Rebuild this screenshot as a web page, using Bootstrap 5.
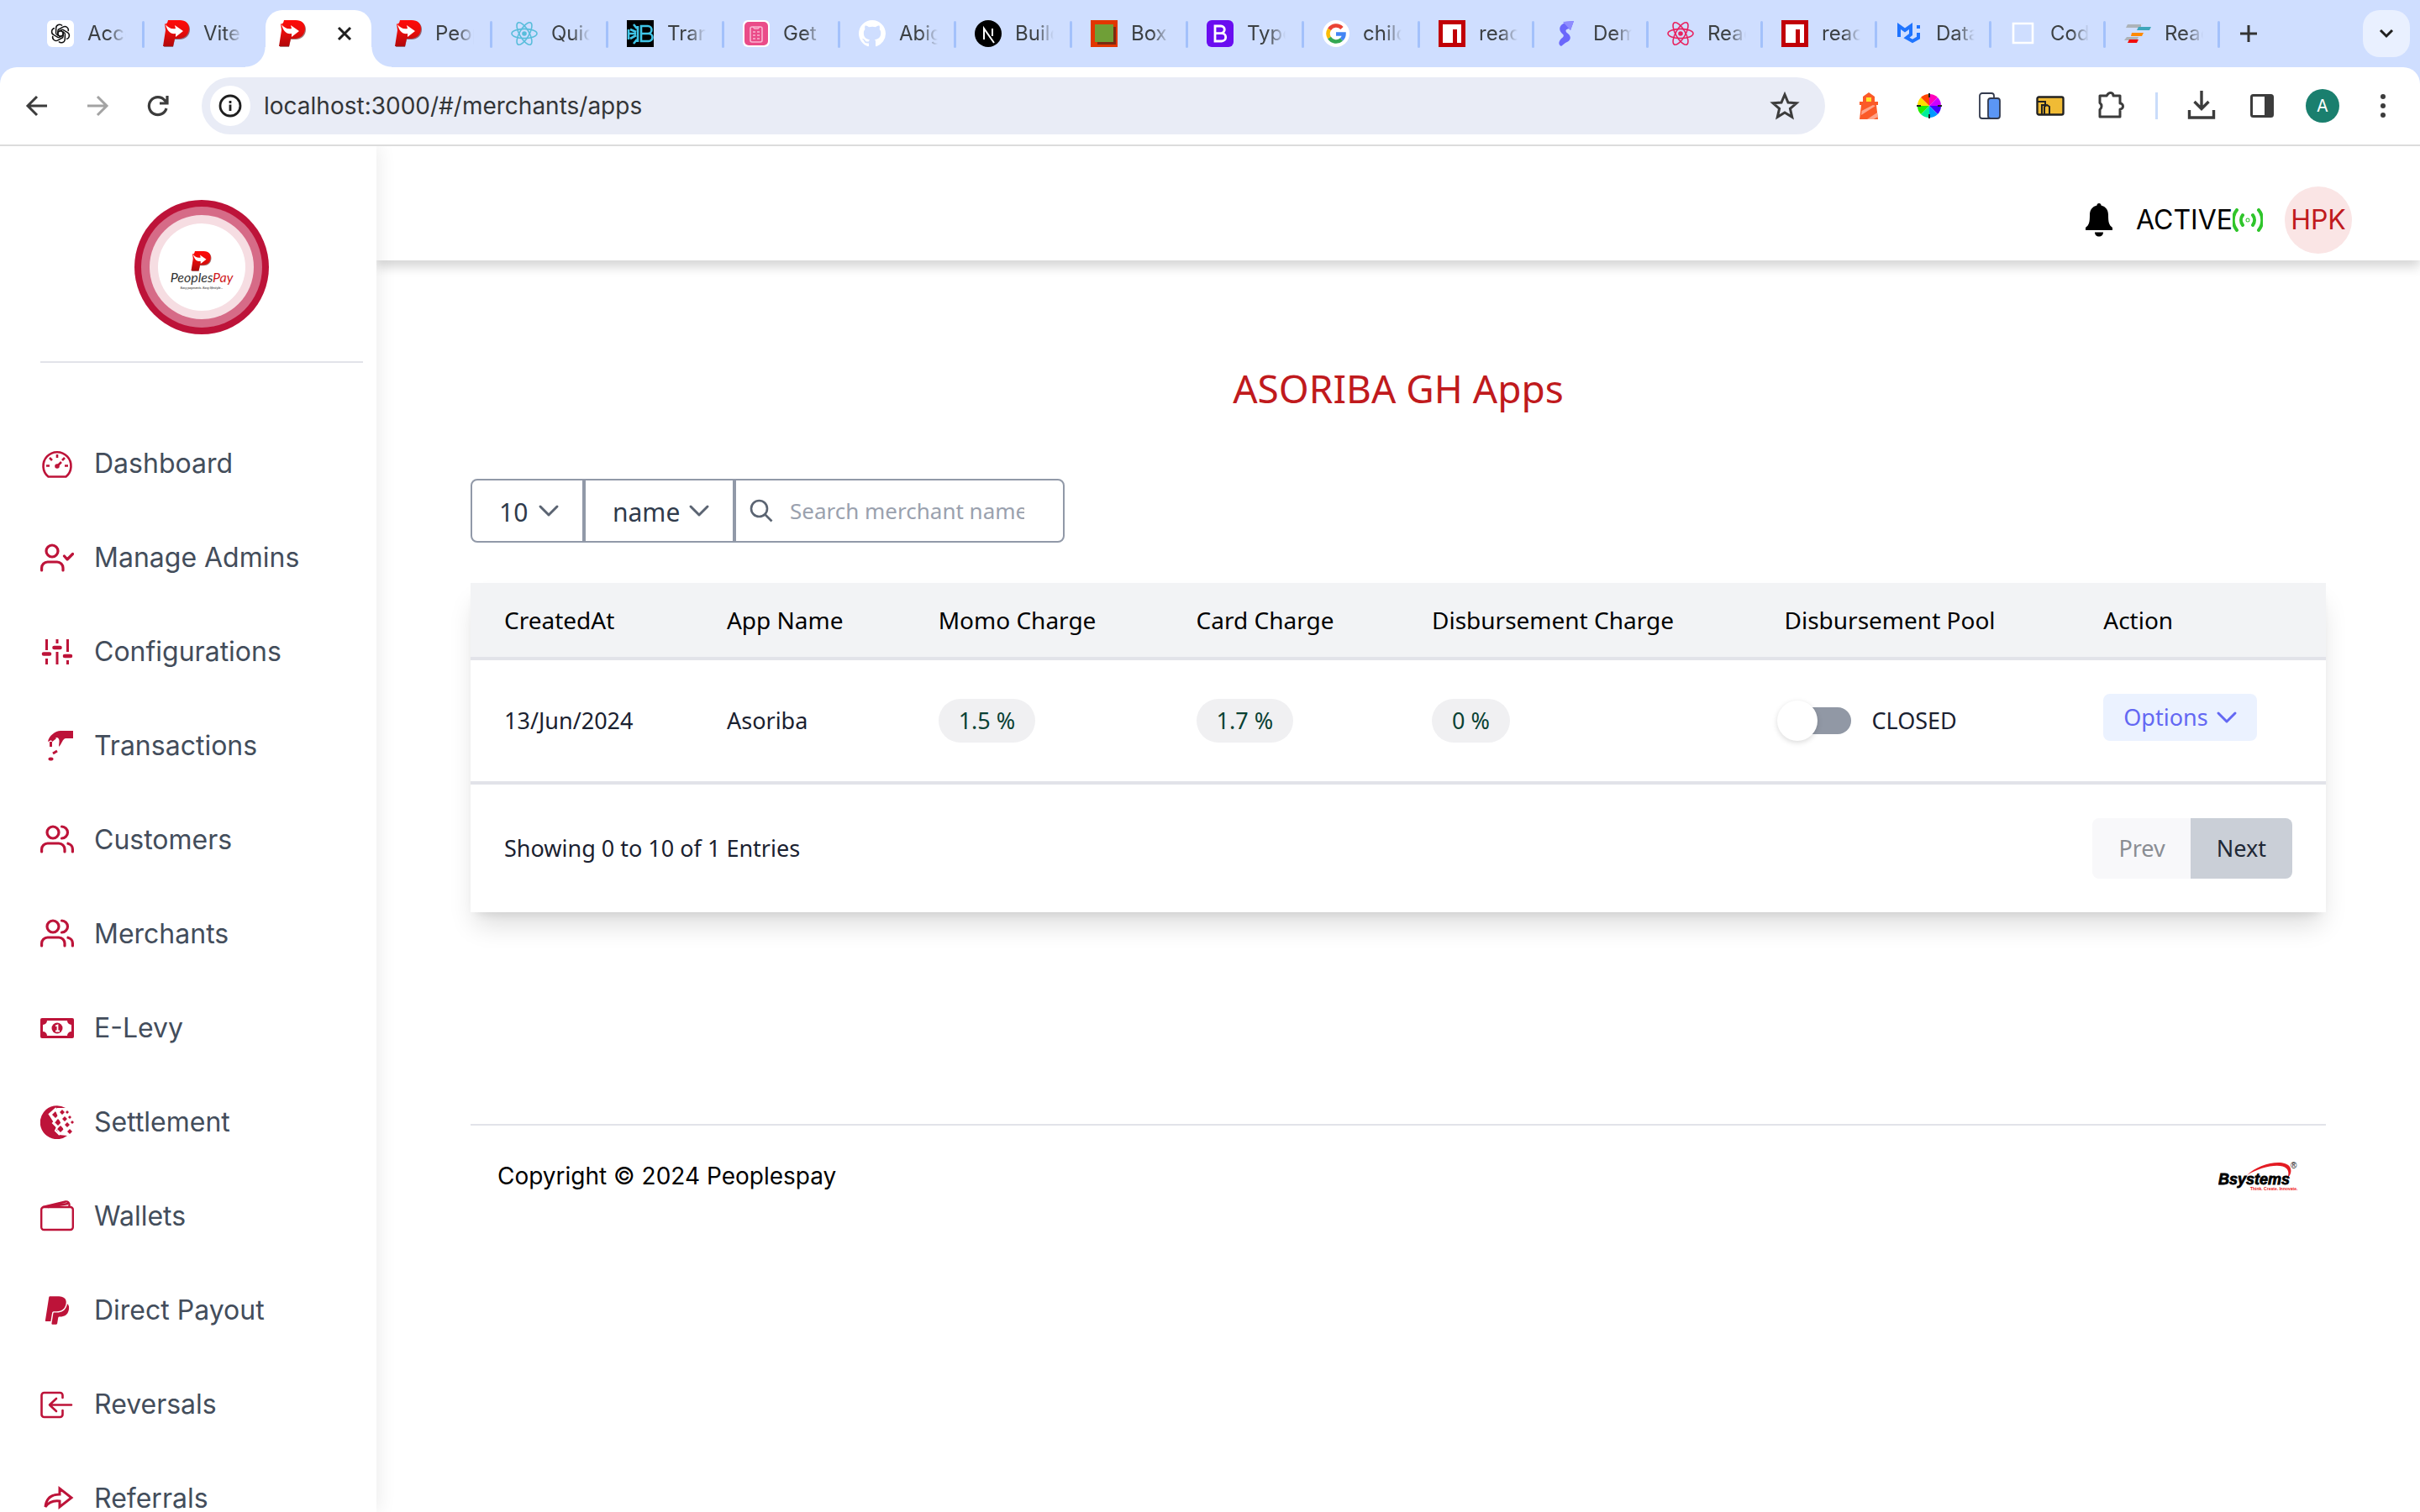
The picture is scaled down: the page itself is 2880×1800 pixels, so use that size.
<!DOCTYPE html>
<html lang="en">
<head>
<meta charset="utf-8">
<meta name="viewport" content="width=device-width, initial-scale=1">
<title>PeoplesPay - Merchant apps</title>
<link href="https://cdn.jsdelivr.net/npm/bootstrap@5.3.0/dist/css/bootstrap.min.css" rel="stylesheet">
<style>
  :root { --brand: #bd1339; --ui: Inter, "Liberation Sans", sans-serif; --copy: "Noto Sans", "Open Sans", sans-serif; }
  body { font-family: var(--ui); font-size: 28px; line-height: 40px; color: #000; background: #fff; }
  svg { flex: none; display: block; }

  /* browser frame */
  .tabstrip { height: 80px; background: #cfdeff; padding-left: 34px; padding-right: 12px; }
  .tabs-row { height: 80px; min-width: 0; }
  .tab-item { flex: 0 1 138px; height: 56px; padding-left: 22px; gap: 16px; color: #3c4043; font-size: 24px; line-height: 32px; position: relative; min-width: 0; text-decoration: none; }
  .tab-item.narrow { flex-basis: 136px; }
  .tab-item::after { content: ""; position: absolute; right: 0; top: 13px; width: 3px; height: 32px; background: #a3c1fb; border-radius: 2px; }
  .tab-item.plain::after, .tab-item.current::after { display: none; }
  .tab-item svg { width: 32px; height: 32px; }
  .tab-title { width: 46px; overflow: hidden; white-space: nowrap; -webkit-mask-image: linear-gradient(90deg, #000 55%, transparent); mask-image: linear-gradient(90deg, #000 55%, transparent); }
  .tab-item.current { height: 68px; margin-top: 12px; padding-bottom: 12px; gap: 30px; z-index: 1; }
  .tab-item.current::before { content: ""; position: absolute; z-index: -1; left: 6px; right: 6px; top: 0; bottom: 0; background: #fff; border-radius: 20px 20px 0 0; }
  .tab-flare { position: absolute; bottom: 0; width: 24px; height: 24px; }
  .tab-flare.at-start { left: -18px; background: radial-gradient(circle at 0 0, transparent 23px, #fff 24px); }
  .tab-flare.at-end { right: -18px; background: radial-gradient(circle at 100% 0, transparent 23px, #fff 24px); }
  .bare { border: 0; background: none; padding: 0; color: inherit; display: flex; align-items: center; justify-content: center; }
  .new-tab { width: 36px; height: 36px; }
  .tab-menu { width: 56px; height: 56px; border-radius: 20px; background: #e9f0ff; }
  .toolbar-wrap { background: #cfdeff; }
  .toolbar { height: 94px; background: #fff; border-bottom: 2px solid #dcdcdc; border-radius: 20px 20px 0 0; padding: 0 8px; }
  .tool { width: 72px; height: 68px; }
  .tool-rule { width: 36px; height: 32px; }
  .tool-rule span { width: 3px; height: 32px; background: #c9dcfa; }
  .omnibox { height: 68px; border-radius: 34px; background: #e9ecf6; margin: 0 16px; padding: 0 12px 0 10px; }
  .site-info { width: 48px; height: 48px; border-radius: 50%; background: #fff; margin-right: 16px; }
  .omnibox input { border: 0; background: none; outline: 0; color: #333537; font-size: 28px; line-height: 40px; padding: 0; min-width: 0; }
  .profile { width: 40px; height: 40px; border-radius: 50%; background: #1a7f6e; color: #fff; font-size: 20px; line-height: 40px; }
  .c-react { color: #58bddb; }
  .c-heart { color: #e8225f; }

  /* app shell */
  .shell { min-height: 0; overflow: hidden; }
  .side { width: 448px; padding: 38px 16px 0 48px; box-shadow: 4px 0 20px rgba(0,0,0,.07); background: #fff; }
  .side-logo { width: 160px; height: 160px; margin: 26px auto 32px; }
  .side hr { margin: 0; border: 0; height: 2px; background: #e2e3e9; opacity: 1; }
  .side-nav { padding-top: 64px; }
  .side-nav a { height: 112px; gap: 24px; color: #434d5b; font-size: 32px; line-height: 48px; text-decoration: none; }
  .side-nav svg { color: var(--brand); width: 40px; height: 40px; }
  .content-col { min-width: 0; }
  .topbar { height: 136px; padding: 40px 81px 0 0; font-size: 32px; background: #fff; box-shadow: 0 8px 12px rgba(0,0,0,.16); }
  .avatar { width: 80px; height: 80px; margin-left: 26px; border-radius: 50%; background: #fae5e5; color: #c01a1d; font-size: 32px; }

  /* page */
  .page { padding: 0 112px; font-family: var(--copy); font-size: 27px; }
  .page h1 { margin: 116px 0 72px; color: #c01a1d; font-size: 46px; line-height: 72px; font-weight: 400; }
  .filters { height: 76px; border: 2px solid #9199a8; border-radius: 8px; width: 707px; }
  .filters .form-select { width: auto; flex: none; height: 100%; border: 0; border-right: 4px solid #9199a8; border-radius: 0; padding: 4px 0 0 32px; color: #2f3a4b; font-size: 30px; line-height: 44px; background-color: transparent; background-size: 28px 28px;
    background-image: url("data:image/svg+xml,%3csvg xmlns='http://www.w3.org/2000/svg' viewBox='0 0 28 28'%3e%3cpath d='M4 9l10 10L24 9' fill='none' stroke='%235b6472' stroke-width='3' stroke-linecap='round' stroke-linejoin='round'/%3e%3c/svg%3e"); background-position: right 26px center; }
  .filters .pick-size { width: 135px; }
  .filters .pick-field { width: 179px; }
  .filters .search-box { padding: 0 46px 0 16px; gap: 20px; color: #5b6472; min-width: 0; }
  .filters .search-box input { border: 0; outline: 0; padding: 0; font-size: 26px; line-height: 40px; min-width: 0; color: #2f3a4b; background: none; }
  .filters input::placeholder { color: #9aa1ae; opacity: 1; }
  .panel { margin-top: 48px; background: #fff; box-shadow: 0 20px 30px -6px rgba(0,0,0,.14), 0 8px 12px -8px rgba(0,0,0,.12); }
  .apps { table-layout: fixed; border-collapse: separate; border-spacing: 0; margin: 0; --bs-table-bg: transparent; border-color: #e2e3e9; }
  .apps > :not(caption) > * > * { padding: 0 0 0 40px; border-bottom: 4px solid #e2e3e9; vertical-align: middle; }
  .apps thead th { height: 92px; background: #f2f3f5; color: #000; font-weight: 400; font-size: 28px; white-space: nowrap; }
  .apps tbody td { height: 148px; color: #1a2130; white-space: nowrap; }
  .rate { display: inline-block; height: 52px; line-height: 52px; padding: 0 24px; border-radius: 26px; background: #f0f0f2; color: #0a4234; }
  .pool-switch { appearance: none; -webkit-appearance: none; position: relative; width: 80px; height: 32px; margin: 0; border-radius: 16px; background: #9198a5; flex: none; }
  .pool-switch::before { content: ""; position: absolute; left: -8px; top: -8px; width: 48px; height: 48px; border-radius: 50%; background: #fff; box-shadow: 0 2px 6px rgba(0,0,0,.15); }
  .pool-switch:checked::before { left: 40px; }
  .btn-options { height: 56px; padding: 0 22px 0 24px; margin-bottom: 8px; gap: 8px; border: 0; border-radius: 8px; background: #ebf2ff; color: #6368f3; font-size: 27px; line-height: 40px; }
  .panel-foot { height: 152px; padding: 0 40px; color: #1a2130; }
  .pager .btn { height: 72px; padding: 0 31px; border: 0; border-radius: 8px; font-size: 27px; line-height: 40px; }
  .pager .btn:first-child { background: #f8f8fa; color: #8a8d93; opacity: 1; }
  .pager .btn:last-child { background: #cacfd7; color: #1f2836; }
  .foot { margin-top: 252px; padding: 0 32px; border-top: 2px solid #e2e3e9; font-family: var(--ui); font-size: 28px; height: 122px; }
</style>
</head>
<body class="vh-100 overflow-hidden d-flex flex-column">

<svg width="0" height="0" class="position-absolute" aria-hidden="true">
  <defs>
    <linearGradient id="redfade" x1="0" y1="0" x2="0" y2="1"><stop offset="0" stop-color="#ff0a08"/><stop offset=".45" stop-color="#e80d0b"/><stop offset="1" stop-color="#b0080a"/></linearGradient>
    <symbol id="pmark" viewBox="0 0 32 32">
      <path d="M7 1h14c7 0 11 4 11 10 0 8-6 12-12 12h-6l-2 9H1l4-17-2-3z" fill="#5a0a0a" opacity=".55"/>
      <path d="M6 0h14c7 0 11 4 11 10 0 7-5 12-12 12h-5l-2 9H0l3-19-1-8c1 1 3 1 4-4z" fill="url(#redfade)"/>
      <path d="M3 5c3 4 7 6 12 5l-1-4 10 7-9 7v-4C9 17 5 13 3 5z" fill="#fff"/>
    </symbol>
    <symbol id="reactmark" viewBox="0 0 32 32"><g fill="none" stroke="currentColor" stroke-width="1.6"><ellipse cx="16" cy="16" rx="15" ry="5.6"/><ellipse cx="16" cy="16" rx="15" ry="5.6" transform="rotate(60 16 16)"/><ellipse cx="16" cy="16" rx="15" ry="5.6" transform="rotate(120 16 16)"/></g><circle cx="16" cy="16" r="2.8" fill="currentColor"/></symbol>
    <symbol id="npmmark" viewBox="0 0 32 32"><path d="M0 0h32v32H0z" fill="#c10006"/><path d="M5 5h22v22h-5V11h-5v16H5z" fill="#fff"/></symbol>
    <symbol id="people" viewBox="0 0 40 40"><g fill="none" stroke="currentColor" stroke-width="3.2" stroke-linecap="round"><circle cx="15" cy="11" r="7"/><path d="M1.6 34v-3a7 7 0 0 1 7-7H22a7 7 0 0 1 7 7v3M25.500 4a7 7 0 0 1 0 14M33 24.200a7 7 0 0 1 5.400 7V34"/></g></symbol>
    <symbol id="chev" viewBox="0 0 28 28"><path d="M4 9l10 10L24 9" fill="none" stroke="currentColor" stroke-width="3" stroke-linecap="round" stroke-linejoin="round"/></symbol>
  </defs>
</svg>

<header class="flex-shrink-0">
  <div class="tabstrip d-flex align-items-center">
    <nav class="tabs-row d-flex align-items-center flex-grow-1" aria-label="Browser tabs">
      <a class="tab-item d-flex align-items-center" href="#"><svg viewBox="0 0 32 32"><rect width="32" height="32" rx="6" fill="#fff"/><g fill="none" stroke="#111" stroke-width="1.5"><path id="petal" d="M13 11.500l6-3.400a4.300 4.300 0 0 1 6.200 5M13 11.500v6.500l3 1.700"/><use href="#petal" transform="rotate(60 16 16)"/><use href="#petal" transform="rotate(120 16 16)"/><use href="#petal" transform="rotate(180 16 16)"/><use href="#petal" transform="rotate(240 16 16)"/><use href="#petal" transform="rotate(300 16 16)"/></g></svg><span class="tab-title">Acco</span></a>
      <a class="tab-item plain d-flex align-items-center" href="#"><svg><use href="#pmark"/></svg><span class="tab-title">Vite</span></a>
      <a class="tab-item current d-flex align-items-center" href="#" aria-label="PeoplesPay" aria-current="page"><i class="tab-flare at-start"></i><i class="tab-flare at-end"></i><svg><use href="#pmark"/></svg><svg viewBox="0 0 32 32"><path d="M9 9l14 14M23 9L9 23" stroke="#1f1f1f" stroke-width="3" fill="none"/></svg></a>
      <a class="tab-item d-flex align-items-center" href="#"><svg><use href="#pmark"/></svg><span class="tab-title">Peop</span></a>
      <a class="tab-item d-flex align-items-center" href="#"><svg class="c-react"><use href="#reactmark"/></svg><span class="tab-title">Quick</span></a>
      <a class="tab-item d-flex align-items-center" href="#"><svg viewBox="0 0 32 32"><path d="M0 0h32v32H0z" fill="#000"/><g fill="none" stroke="#3fc4e6" stroke-width="2.600"><path d="M17 7h8a4 4 0 0 1 0 9h-8zM17 16h9a4 4 0 0 1 0 9h-9zM13 7v19M4 11l7 3M3 16h8M4 22l7-4M8 5l4 5M8 28l4-5M2 11v12"/></g></svg><span class="tab-title">Trans</span></a>
      <a class="tab-item d-flex align-items-center" href="#"><svg viewBox="0 0 32 32"><rect width="32" height="32" rx="6" fill="#fff"/><rect x="2" y="2" width="28" height="28" rx="5" fill="#ea4c89"/><g fill="none" stroke="#f9b4d0" stroke-width="1.600"><rect x="9" y="8" width="14" height="18" rx="2"/><path d="M12 8l2 2h4l2-2M12 14h3M17 14h3M12 18h3M17 18h3M12 22h3M17 22h3"/></g></svg><span class="tab-title">Get</span></a>
      <a class="tab-item d-flex align-items-center" href="#"><svg viewBox="0 0 16 16" fill="#fff"><path d="M8 0C3.580 0 0 3.580 0 8c0 3.540 2.290 6.530 5.470 7.590.4.070.55-.17.55-.38 0-.19-.01-.82-.01-1.490-2.010.37-2.530-.49-2.690-.94-.09-.23-.48-.94-.82-1.130-.28-.15-.68-.52-.01-.53.63-.01 1.080.58 1.230.82.72 1.210 1.870.87 2.330.66.07-.52.28-.87.51-1.070-1.780-.2-3.640-.89-3.640-3.950 0-.87.31-1.590.82-2.150-.08-.2-.36-1.020.08-2.120 0 0 .67-.21 2.200.82.64-.18 1.320-.27 2-.27s1.360.09 2 .27c1.530-1.040 2.200-.82 2.200-.82.44 1.100.16 1.920.08 2.120.51.56.82 1.270.82 2.150 0 3.070-1.870 3.750-3.650 3.950.29.25.54.73.54 1.480 0 1.070-.01 1.930-.01 2.200 0 .21.15.46.55.38A8 8 0 0 0 16 8c0-4.420-3.580-8-8-8z"/></svg><span class="tab-title">Abiga</span></a>
      <a class="tab-item d-flex align-items-center" href="#"><svg viewBox="0 0 32 32"><circle cx="16" cy="16" r="16"/><path d="M11 23V10l12 17M21 10v9" fill="none" stroke="#fff" stroke-width="2"/></svg><span class="tab-title">Build</span></a>
      <a class="tab-item d-flex align-items-center" href="#"><svg viewBox="0 0 32 32"><path d="M0 0h32v32H0z" fill="#e23600"/><path d="M8 8h22v21H8z" fill="#7a2b12"/><path d="M5 5h22v21H5z" fill="#6f9f37"/></svg><span class="tab-title">Box</span></a>
      <a class="tab-item d-flex align-items-center" href="#"><svg viewBox="0 0 32 32"><rect width="32" height="32" rx="6" fill="#6a0df0"/><path d="M10 7h7a4.300 4.300 0 0 1 0 8.600h-7zM10 15.600h8a4.700 4.700 0 0 1 0 9.400h-8z" fill="none" stroke="#fff" stroke-width="2.800"/></svg><span class="tab-title">Typog</span></a>
      <a class="tab-item d-flex align-items-center" href="#"><svg viewBox="0 0 32 32"><circle cx="16" cy="16" r="16" fill="#fff"/><g fill="none" stroke-width="4.500"><path d="M23 9.500A9.500 9.500 0 0 0 8 11" stroke="#ea4335"/><path d="M8 11a9.500 9.500 0 0 0 0 10" stroke="#fbbc05"/><path d="M8 21a9.500 9.500 0 0 0 14.500 2" stroke="#34a853"/><path d="M22.500 23c2-2 3-4 3-6.500H16" stroke="#4285f4"/></g></svg><span class="tab-title">child</span></a>
      <a class="tab-item narrow d-flex align-items-center" href="#"><svg><use href="#npmmark"/></svg><span class="tab-title">react</span></a>
      <a class="tab-item narrow d-flex align-items-center" href="#"><svg viewBox="0 0 32 32"><path d="M25 1l-4 11-2-2c-4 1-5 3-1 6 5 4 3 9-3 11l-5 4c-4-2-3-6 0-9 3-2 4-4 1-6C6 11 8 5 15 3l-1-1z" fill="#6b67fb"/><path d="M12 2l13-1-4 11z" fill="#8f8cff"/></svg><span class="tab-title">Demo</span></a>
      <a class="tab-item narrow d-flex align-items-center" href="#"><svg class="c-heart"><use href="#reactmark"/></svg><span class="tab-title">React</span></a>
      <a class="tab-item narrow d-flex align-items-center" href="#"><svg><use href="#npmmark"/></svg><span class="tab-title">react</span></a>
      <a class="tab-item narrow d-flex align-items-center" href="#"><svg viewBox="0 0 32 32"><path d="M4 20V7l7 5 7-5v10l-5 4 7 4 7-4v-6M27 10V6" fill="none" stroke="#1f74ff" stroke-width="4"/></svg><span class="tab-title">Data</span></a>
      <a class="tab-item narrow d-flex align-items-center" href="#"><svg viewBox="0 0 32 32"><path d="M4 4h23v23H4z" fill="none" stroke="#fff" stroke-width="2.600"/></svg><span class="tab-title">Code</span></a>
      <a class="tab-item narrow d-flex align-items-center" href="#"><svg viewBox="0 0 32 32"><path d="M4 5h16v4H2z" fill="#adb3b8"/><path d="M17 8h15l-2 4H15z" fill="#3fa6bb"/><path d="M9 15h14l-2 4H8z" fill="#ff8a00"/><path d="M3 20h14l-2 4H0z" fill="#adb3b8"/><path d="M6 23h11l-2 4H4z" fill="#f20d0d"/></svg><span class="tab-title">React</span></a>
      <button class="bare new-tab ms-3" aria-label="New tab"><svg viewBox="0 0 24 24" width="24" height="24"><path d="M12 2v20M2 12h20" stroke="#333" stroke-width="3"/></svg></button>
    </nav>
    <button class="bare tab-menu flex-shrink-0" aria-label="Search tabs"><svg width="24" height="24" viewBox="0 0 24 24"><path d="M5 8l7 7 7-7" fill="none" stroke="#1f1f1f" stroke-width="3"/></svg></button>
  </div>
  <div class="toolbar-wrap">
    <div class="toolbar d-flex align-items-center">
      <button class="bare tool" aria-label="Back"><svg width="32" height="32" viewBox="0 0 32 32"><path d="M28 16H6M16 5L5 16l11 11" fill="none" stroke="#3c3c3c" stroke-width="3"/></svg></button>
      <button class="bare tool" aria-label="Forward"><svg width="32" height="32" viewBox="0 0 32 32"><path d="M4 16h22M16 5l11 11-11 11" fill="none" stroke="#a3a3a3" stroke-width="3"/></svg></button>
      <button class="bare tool" aria-label="Reload"><svg width="32" height="32" viewBox="0 0 32 32"><path d="M26 19a10.500 10.500 0 1 1-2-9.500l3 3M27 4v9h-9" fill="none" stroke="#3c3c3c" stroke-width="3.200"/></svg></button>
      <div class="omnibox d-flex align-items-center flex-grow-1">
        <button class="bare site-info" aria-label="Site information"><svg width="28" height="28" viewBox="0 0 28 28"><circle cx="14" cy="14" r="12" fill="none" stroke="#1f1f1f" stroke-width="2.800"/><path d="M14 12.500V20M14 8v3" stroke="#1f1f1f" stroke-width="2.800"/></svg></button>
        <input class="flex-grow-1" type="text" aria-label="Address" value="localhost:3000/#/merchants/apps">
        <button class="bare tool" aria-label="Bookmark"><svg width="36" height="36" viewBox="0 0 36 36"><path d="M18 4.500l4 9.500 10 .8-7.600 6.600 2.300 9.900L18 26l-8.700 5.300 2.300-9.900L4 14.800l10-.8z" fill="none" stroke="#3c3c3c" stroke-width="3"/></svg></button>
      </div>
      <button class="bare tool" aria-label="Lighthouse"><svg width="32" height="32" viewBox="0 0 32 32"><path d="M9 5l7-5 7 5v6h4v4h-2l2 17H5l2-17H5v-4h4z" fill="#fb5a28"/><path d="M13 6h6v5h-6z" fill="#ffe42b"/><path d="M7.500 22L21 15l3 1-17 11zM14 32l12-8 .8 5-5 3z" fill="#ffa48a"/></svg></button>
      <button class="bare tool" aria-label="Colour picker"><svg width="32" height="32" viewBox="0 0 32 32"><path d="M16 16L16 2A14 14 0 0 1 26 6z" fill="#f0b"/><path d="M16 16L26 6A14 14 0 0 1 30 16z" fill="#c0f"/><path d="M16 16H30A14 14 0 0 1 26 26z" fill="#40f"/><path d="M16 16L26 26A14 14 0 0 1 16 30z" fill="#09f"/><path d="M16 16V30A14 14 0 0 1 6 26z" fill="#0e9"/><path d="M16 16L6 26A14 14 0 0 1 2 16z" fill="#2e0"/><path d="M16 16H2A14 14 0 0 1 6 6z" fill="#fd0"/><path d="M16 16L6 6A14 14 0 0 1 16 2z" fill="#f40"/><path d="M16 1v5M16 26v5M1 16h5M26 16h5" stroke="#222" stroke-width="2"/></svg></button>
      <button class="bare tool" aria-label="Devices"><svg width="32" height="32" viewBox="0 0 32 32"><rect x="4" y="1" width="17" height="30" rx="3" fill="#fff" stroke="#333a4d" stroke-width="1.800"/><rect x="14" y="7" width="14" height="24" rx="3" fill="#5b96f5" stroke="#333a4d" stroke-width="1.800"/></svg></button>
      <button class="bare tool" aria-label="Tape"><svg width="34" height="26" viewBox="0 0 34 26"><rect x="1.500" y="2.500" width="31" height="21" rx="2" fill="#f0bb35" stroke="#222" stroke-width="2.400"/><path d="M2 8h9v4H7v11M10 24V14l3-2 3 2v10" fill="none" stroke="#222" stroke-width="2"/></svg></button>
      <button class="bare tool" aria-label="Extensions"><svg width="36" height="36" viewBox="0 0 36 36"><path d="M15 3.500a3.500 3.500 0 0 1 6 2.500h8v9a3.500 3.500 0 0 1 0 7v9H5v-8.500a5 5 0 0 0 0-8V6h8z" fill="none" stroke="#3c3c3c" stroke-width="3" stroke-linejoin="round"/></svg></button>
      <div class="tool-rule d-flex justify-content-center"><span></span></div>
      <button class="bare tool" aria-label="Downloads"><svg width="36" height="36" viewBox="0 0 36 36"><path d="M18 0v21M9.500 13l8.500 8.500 8.500-8.500M3.500 23v9h29v-9" fill="none" stroke="#3c3c3c" stroke-width="3.400"/></svg></button>
      <button class="bare tool" aria-label="Side panel"><svg width="32" height="32" viewBox="0 0 32 32"><rect x="3.500" y="3.500" width="25" height="25" rx="2" fill="none" stroke="#3c3c3c" stroke-width="3"/><path d="M19 3h10v26H19z" fill="#3c3c3c"/></svg></button>
      <button class="bare tool" aria-label="Profile"><span class="profile">A</span></button>
      <button class="bare tool" aria-label="Menu"><svg width="32" height="32" viewBox="0 0 32 32" fill="#3c3c3c"><circle cx="16" cy="5" r="3"/><circle cx="16" cy="16" r="3"/><circle cx="16" cy="27" r="3"/></svg></button>
    </div>
  </div>
</header>

<div class="shell d-flex flex-grow-1">
  <aside class="side flex-shrink-0 overflow-visible position-relative z-1">
    <svg class="side-logo" viewBox="0 0 160 160" role="img" aria-label="PeoplesPay">
      <circle cx="80" cy="80" r="80" fill="#bd1339"/><circle cx="80" cy="80" r="72" fill="#d66b87"/><circle cx="80" cy="80" r="62" fill="#f6dde2"/><circle cx="80" cy="80" r="52" fill="#fff"/>
      <use href="#pmark" x="67" y="61" width="25" height="24"/>
      <text x="80" y="98" text-anchor="middle" font-family="Lato, sans-serif" font-size="16" font-style="italic" fill="#333">Peoples<tspan fill="#cf1a22">Pay</tspan></text>
      <text x="80" y="106" text-anchor="middle" font-family="Lato, sans-serif" font-size="4" font-style="italic" fill="#111">Easy payments. Easy lifestyle...</text>
    </svg>
    <hr>
    <nav class="side-nav d-flex flex-column" aria-label="Main">
      <a class="d-flex align-items-center flex-shrink-0" href="#"><svg viewBox="0 0 40 40" fill="none" stroke="currentColor" stroke-width="2.600"><path d="M9.500 35.500a16.500 16.500 0 1 1 21 0z" stroke-linejoin="round"/><path d="M20 9v4M11 13l3 3M29 13l-3 3M7 22.500h4M29 22.500h4M20 23l5-5"/><circle cx="20" cy="23" r="1.500"/></svg>Dashboard</a>
      <a class="d-flex align-items-center flex-shrink-0" href="#"><svg viewBox="0 0 40 40" fill="none" stroke="currentColor" stroke-width="3.200" stroke-linecap="round" stroke-linejoin="round"><circle cx="14" cy="12" r="7"/><path d="M1.600 35v-3a7 7 0 0 1 7-7H20a7 7 0 0 1 7 7v3M28.500 18l3.500 4 6.500-6.500"/></svg>Manage Admins</a>
      <a class="d-flex align-items-center flex-shrink-0" href="#"><svg viewBox="0 0 40 40" fill="none" stroke="currentColor" stroke-width="3"><path d="M7.500 5v13M7.500 28v7M20 5v5M20 20v15M32.500 5v15M32.500 30v5"/><path d="M4 22.500h7M16.500 15h7M29 25h7" stroke-width="4.600" stroke-linecap="round"/></svg>Configurations</a>
      <a class="d-flex align-items-center flex-shrink-0" href="#"><svg viewBox="0 0 40 40" fill="currentColor"><path d="M39 2v9h-9c-4 1-4 6-8 10 0-5 2-9-2-11-4 0-6 3-11 5 1-7 9-13 15-13z"/><g fill="none" stroke="currentColor" stroke-width="3"><path d="M12.500 15v8M18 10l-5 4M15 29l5-3" stroke-dasharray="6 2"/></g><ellipse cx="12.500" cy="35.500" rx="3" ry="2"/></svg>Transactions</a>
      <a class="d-flex align-items-center flex-shrink-0" href="#"><svg><use href="#people"/></svg>Customers</a>
      <a class="d-flex align-items-center flex-shrink-0" href="#"><svg><use href="#people"/></svg>Merchants</a>
      <a class="d-flex align-items-center flex-shrink-0" href="#"><svg viewBox="0 0 40 40"><rect y="8" width="40" height="24" rx="2" fill="currentColor"/><path d="M8 11h24a5 5 0 0 0 5 5v8a5 5 0 0 0-5 5H8a5 5 0 0 0-5-5v-8a5 5 0 0 0 5-5z" fill="#fff"/><circle cx="20" cy="20" r="6.500" fill="currentColor"/><path d="M18 17.500l2.500-1V23M18 23.500h5" fill="none" stroke="#fff" stroke-width="1.800"/></svg>E-Levy</a>
      <a class="d-flex align-items-center flex-shrink-0" href="#"><svg viewBox="0 0 40 40"><path d="M30 3A20 20 0 1 0 32 36L22 35 17 22 10 11 20 3z" fill="currentColor"/><g fill="currentColor"><path d="M18 7l4 4-4 4-4-4zM21 16l4 4-4 4-4-4zM24 24l4 4-4 4-4-4zM26 5l3 3-3 3-3-3zM29 13l3 3-3 3-3-3zM32 20l3 3-3 3-3-3zM35 28l3 3-3 3-3-3zM32 6l2 2-2 2-2-2zM35 12l2 2-2 2-2-2zM38 18l2 2-2 2-2-2z"/></g><path d="M10 11l8-7 13 30M14 13l4 5-3 3 5 5-2 4 5 5" fill="none" stroke="#fff" stroke-width="2"/></svg>Settlement</a>
      <a class="d-flex align-items-center flex-shrink-0" href="#"><svg viewBox="0 0 40 40" fill="none" stroke="currentColor" stroke-width="2.400" stroke-linejoin="round"><rect x="1.200" y="9" width="37.600" height="27" rx="3"/><path d="M3 9L30 2.500c2.500-.5 4.500 1 4.500 3.500v3M9 9l24-4"/></svg>Wallets</a>
      <a class="d-flex align-items-center flex-shrink-0" href="#"><svg viewBox="-60 -16 504 544" fill="currentColor"><path d="M111.400 295.900c-3.500 19.200-17.400 108.700-21.500 134-.3 1.800-1 2.500-3 2.500H12.300c-7.600 0-13.100-6.600-12.100-13.900L58.800 46.600c1.500-9.600 10.100-16.900 20-16.900 152.300 0 165.100-3.700 204 11.400 60.100 23.300 65.600 79.500 44 140.300-21.500 62.600-72.500 89.500-140.100 90.300-43.400.7-69.500-7-75.300 24.200zM357.100 152c-1.800-1.300-2.500-1.800-3 1.300-2 11.400-5.100 22.500-8.800 33.600-39.900 113.800-150.500 103.900-204.500 103.900-6.100 0-10.100 3.300-10.900 9.400-22.600 140.400-27.100 169.700-27.100 169.700-1 7.100 3.500 12.900 10.600 12.900h63.500c8.600 0 15.700-6.300 17.400-14.900.7-5.400-1.100 6.100 14.400-91.300 4.600-22 14.300-19.700 29.300-19.700 71 0 126.400-28.800 142.900-112.300 6.500-34.800 4.600-71.400-23.800-92.600z"/></svg>Direct Payout</a>
      <a class="d-flex align-items-center flex-shrink-0" href="#"><svg viewBox="0 0 40 40" fill="none" stroke="currentColor" stroke-width="2.600" stroke-linecap="round" stroke-linejoin="round"><path d="M26.500 12V9a3 3 0 0 0-3-3h-19a3 3 0 0 0-3 3v23a3 3 0 0 0 3 3h19a3 3 0 0 0 3-3v-5M37 20.500H11M19 13l-8 7.500 8 7.500"/></svg>Reversals</a>
      <a class="d-flex align-items-center flex-shrink-0" href="#"><svg viewBox="0 0 40 40" fill="none" stroke="currentColor" stroke-width="3"><path d="M23 8v7C13 15 7 19 6 30c4-6 9-8 17-7v7l14-11z"/></svg>Referrals</a>
    </nav>
  </aside>

  <div class="content-col flex-grow-1 d-flex flex-column">
    <div class="topbar d-flex align-items-center justify-content-end flex-shrink-0">
      <button class="bare me-4" aria-label="Notifications"><svg width="40" height="40" viewBox="0 0 40 40"><path d="M20 0c1.600 0 2.500 1 2.500 2.600C28 4 31 8 31 14c0 9 1 12 5 15v3H4v-3c4-3 5-6 5-15 0-6 3-10 8.500-11.400C17.500 1 18.400 0 20 0zM15 34.500h10c0 3-2 5-5 5s-5-2-5-5z"/></svg></button>
      <span>ACTIVE</span>
      <svg width="36" height="28" viewBox="0 0 36 28" fill="none" stroke="#2fc52b" stroke-width="4" stroke-linecap="round"><circle cx="18" cy="14" r=".5"/><path d="M12 8a10 10 0 0 0 0 12M24 8a10 10 0 0 1 0 12M5 2a19 19 0 0 0 0 24M31 2a19 19 0 0 1 0 24"/></svg>
      <button class="bare avatar">HPK</button>
    </div>

    <main class="page">
      <h1 class="text-center">ASORIBA GH Apps</h1>

      <form class="filters d-flex">
        <select class="form-select pick-size" aria-label="Rows per page"><option>10</option><option>20</option></select>
        <select class="form-select pick-field" aria-label="Search field"><option>name</option></select>
        <div class="search-box d-flex align-items-center flex-grow-1">
          <svg width="28" height="28" viewBox="0 0 28 28" fill="none" stroke="currentColor" stroke-width="2.600"><circle cx="11.500" cy="11.500" r="9.500"/><path d="M18.500 18.500l8 8"/></svg>
          <input class="flex-grow-1" type="text" aria-label="Search merchant name" placeholder="Search merchant name">
        </div>
      </form>

      <section class="panel">
        <table class="table apps">
          <colgroup><col style="width:12%"><col style="width:11.4%"><col style="width:13.9%"><col style="width:12.7%"><col style="width:19%"><col style="width:17.200%"><col></colgroup>
          <thead><tr><th>CreatedAt</th><th>App Name</th><th>Momo Charge</th><th>Card Charge</th><th>Disbursement Charge</th><th>Disbursement Pool</th><th>Action</th></tr></thead>
          <tbody><tr>
            <td>13/Jun/2024</td><td>Asoriba</td>
            <td><span class="rate">1.5 %</span></td><td><span class="rate">1.7 %</span></td><td><span class="rate">0 %</span></td>
            <td><div class="d-flex align-items-center gap-4"><input class="pool-switch" type="checkbox" role="switch" id="pool"><label for="pool">CLOSED</label></div></td>
            <td><button class="btn btn-options d-inline-flex align-items-center">Options<svg width="28" height="28"><use href="#chev"/></svg></button></td>
          </tr></tbody>
        </table>
        <div class="panel-foot d-flex align-items-center justify-content-between">
          <span>Showing 0 to 10 of 1 Entries</span>
          <div class="btn-group pager"><button class="btn" disabled>Prev</button><button class="btn">Next</button></div>
        </div>
      </section>

      <footer class="foot d-flex align-items-center justify-content-between">
        <span>Copyright © 2024 Peoplespay</span>
        <svg width="96" height="36" viewBox="0 0 96 36" role="img" aria-label="Bsystems">
          <path d="M34 17C48 3 78-3 85 7c3 5 1 10-3 14 2-5 2-9-1-12C74 2 50 7 34 17z" fill="#e31b23"/>
          <text x="0" y="28" font-family="Liberation Sans, sans-serif" font-size="18" font-weight="700" font-style="italic" stroke="#000" stroke-width=".8">Bsystems</text>
          <text x="38" y="35" font-family="Liberation Sans, sans-serif" font-size="5" font-weight="700" fill="#f02020">Think. Create. Innovate.</text>
          <text x="86" y="9" font-family="Liberation Sans, sans-serif" font-size="10">®</text>
        </svg>
      </footer>
    </main>
  </div>
</div>
<script src="https://cdn.jsdelivr.net/npm/bootstrap@5.3.0/dist/js/bootstrap.bundle.min.js"></script>
</body>
</html>
